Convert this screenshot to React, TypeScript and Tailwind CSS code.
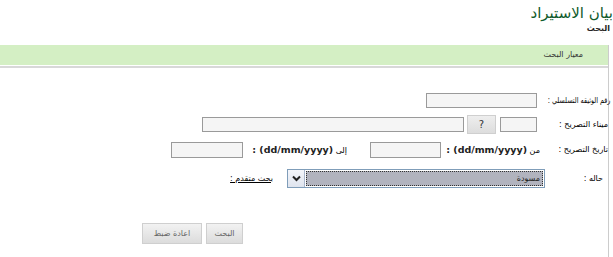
import React from 'react';

function TextBox({ w, h = 15 }: { w: number; h?: number }) {
  return (
    <div
      className="shrink-0 border border-[#9a9a9a] bg-[#f5f5f5]"
      style={{ width: w, height: h }}
    />
  );
}

function GrayButton({ label, w }: { label: string; w: number }) {
  return (
    <button
      type="button"
      className="shrink-0 h-[21px] border border-[#cfcfcf] bg-gradient-to-b from-[#f2f2f2] to-[#dcdcdc] text-[8px] text-[#666] flex items-center justify-center"
      style={{ width: w }}
    >
      {label}
    </button>
  );
}

export default function App() {
  return (
    <div
      dir="rtl"
      className="w-[613px] h-[257px] overflow-hidden bg-white font-['DejaVu_Sans',sans-serif] text-black"
    >
      {/* page title */}
      <div className="pt-[3px] text-[15px] leading-[20px] text-[#0f5b2c] whitespace-nowrap">
        بيان الاستيراد
      </div>
      <div className="pr-[3px] text-[8px] leading-[11px] font-bold text-[#222]">البحث</div>

      <div className="mt-[11px] mr-[4px] border-r border-[#cccccc] h-[220px]">
        <div className="h-[20px] bg-[#d4efc4] flex items-center pr-[25px] text-[8px] text-[#333]">
          معيار البحث
        </div>
        <div className="mt-[1px] h-[2px] bg-[#d8d8d8]" />

        <div className="pt-[25px] text-[8px]">
          {/* document serial */}
          <div className="flex items-center h-[15px]">
            <div className="w-[71px] shrink-0 whitespace-nowrap -mr-[2px]">
              <span className="inline-block origin-right scale-x-[0.8]">رقم الوثيقه التسلسلي :</span>
            </div>
            <div className="mr-[2px]">
              <TextBox w={111} />
            </div>
          </div>

          {/* port */}
          <div className="flex items-center h-[19px] mt-[7px]">
            <div className="w-[71px] shrink-0 whitespace-nowrap">ميناء التصريح :</div>
            <TextBox w={37} />
            <button
              type="button"
              className="shrink-0 mr-[4px] w-[29px] h-[19px] border border-[#cfcfcf] bg-gradient-to-b from-[#eeeeee] to-[#dddddd] text-[10px] text-[#333] flex items-center justify-center"
            >
              ?
            </button>
            <div className="mr-[3px]">
              <TextBox w={262} />
            </div>
          </div>

          {/* declaration date */}
          <div className="flex items-center h-[16px] mt-[8px]">
            <div className="w-[68px] shrink-0 whitespace-nowrap">تاريخ التصريح :</div>
            <div className="w-[99px] shrink-0 whitespace-nowrap">
              من <span className="font-bold text-[9.5px] text-[#222]">(dd/mm/yyyy) :</span>
            </div>
            <TextBox w={71} h={16} />
            <div className="w-[127px] shrink-0 pr-[23px] whitespace-nowrap">
              إلى <span className="font-bold text-[9.5px] text-[#222]">(dd/mm/yyyy) :</span>
            </div>
            <TextBox w={72} h={16} />
          </div>

          {/* status */}
          <div className="flex items-center h-[19px] mt-[11px] pr-[5px]">
            <div className="w-[58px] shrink-0 whitespace-nowrap">حاله :</div>
            <div className="w-[258px] h-[19px] shrink-0 border border-[#7f9db9] flex bg-white">
              <div className="flex-1 m-[1px] border border-dotted border-[#333] bg-[#b1b3be] flex items-center pr-[2px] text-[8px] text-[#222]">
                مسودة
              </div>
              <div className="w-[17px] shrink-0 border-r border-[#a9b6cc] bg-gradient-to-b from-[#f4f6fb] to-[#dfe4ee] flex items-center justify-center">
                <svg width="11" height="11" viewBox="0 0 11 11">
                  <path d="M2 3.5 L5.5 7 L9 3.5" fill="none" stroke="#222" strokeWidth="2" />
                </svg>
              </div>
            </div>
            <a href="#" className="mr-[14px] underline whitespace-nowrap text-black">
              بحث متقدم :
            </a>
          </div>

          {/* actions */}
          <div className="flex items-center gap-[4px] mt-[35px] pr-[365px]">
            <GrayButton label="البحث" w={37} />
            <GrayButton label="اعادة ضبط" w={60} />
          </div>
        </div>
      </div>
    </div>
  );
}
